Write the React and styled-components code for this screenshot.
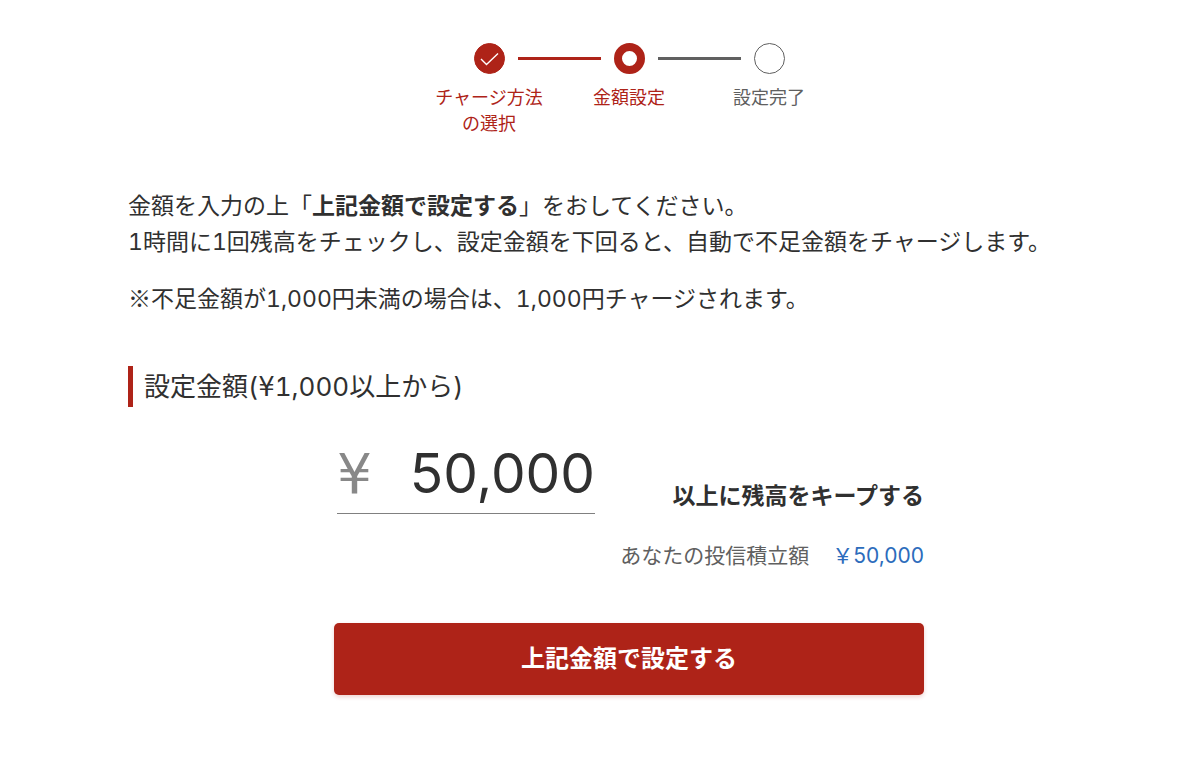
import React, { useState } from 'react'
import styled, { createGlobalStyle } from 'styled-components'

const red = '#ae2318'
const ink = '#303030'
const grey = '#606060'

const GlobalStyle = createGlobalStyle`
  * {
    box-sizing: border-box;
  }

  body {
    margin: 0;
    background: #fff;
    color: ${ink};
    font-family: Inter, 'Noto Sans CJK JP', sans-serif;
    font-size: 23px;
    line-height: 36px;
  }
`

const Page = styled.main`
  padding: 43px 70px 60px 128px;
`

const Steps = styled.ol`
  display: flex;
  justify-content: center;
  margin: 0;
  padding: 0;
  list-style: none;
`

const Step = styled.li`
  width: 140px;
  color: ${props => (props.$reached ? red : grey)};
  font-size: 18px;
  line-height: 26px;
  text-align: center;
`

const Track = styled.div`
  display: flex;
  align-items: center;
  gap: 13px;
  margin-bottom: 11px;
`

const Line = styled.span`
  flex: 1;
  height: 3px;
  background: ${props => props.$color || 'transparent'};
`

const Marker = styled.span`
  display: flex;
  width: 31px;
  height: 31px;
  border: ${props => (props.$state === 'current' ? `8px solid ${red}` : `1px solid ${props.$state === 'done' ? red : grey}`)};
  border-radius: 50%;
  background: ${props => (props.$state === 'done' ? red : '#fff')};
`

const Intro = styled.section`
  margin-top: 51px;
  font-variant-numeric: tabular-nums;
`

const Text = styled.p`
  margin: 0 0 21px;
`

const Mark = styled.span`
  font-family: 'Noto Sans CJK JP', sans-serif;
  line-height: 1;
`

const Yen = styled.span`
  font-family: 'DejaVu Sans', sans-serif;
  line-height: 1;
`

const Heading = styled.h2`
  margin: 49px 0 0;
  padding-left: 11px;
  border-left: 5px solid ${red};
  font-size: 26px;
  font-weight: 400;
  font-variant-numeric: tabular-nums;
  line-height: 41px;
`

const Form = styled.form`
  max-width: 590px;
  margin: 33px auto 0;
`

const AmountRow = styled.div`
  display: flex;
  align-items: flex-end;
  justify-content: space-between;
  padding-left: 3px;
`

const Field = styled.label`
  display: flex;
  align-items: baseline;
  width: 258px;
  height: 74px;
  border-bottom: 1px solid #808080;
  color: #888;
  font-size: 55px;
  line-height: 66px;
`

const Amount = styled.input`
  flex: 1;
  min-width: 0;
  height: 66px;
  padding: 0;
  border: 0;
  outline: 0;
  background: transparent;
  color: ${ink};
  font: inherit;
  text-align: right;
`

const Keep = styled.strong`
  font-weight: 700;
`

const Reserve = styled.p`
  display: flex;
  justify-content: flex-end;
  gap: 23px;
  margin: 24px 0 0;
  color: ${grey};
  font-size: 21px;
`

const Link = styled.a`
  color: #2c6cbc;
  text-decoration: none;
`

const Submit = styled.button`
  width: 100%;
  height: 72px;
  margin-top: 49px;
  padding: 0;
  border: 0;
  border-radius: 5px;
  background: ${red};
  box-shadow: 0 2px 4px rgba(174, 35, 24, 0.2);
  color: #fff;
  font: inherit;
  font-size: 24px;
  font-weight: 700;
  cursor: pointer;
`

const Check = () => (
  <svg width="29" height="29" viewBox="0 0 29 29" fill="none" stroke="#fff" strokeWidth="1.4" aria-hidden="true">
    <path d="M6 15L11.5 20.5L23 9.5" />
  </svg>
)

export default function App() {
  const [amount, setAmount] = useState('50,000')

  return (
    <>
      <GlobalStyle />
      <Page lang="ja">
        <Steps>
          <Step $reached>
            <Track>
              <Line />
              <Marker $state="done">
                <Check />
              </Marker>
              <Line $color={red} />
            </Track>
            チャージ方法
            <br />
            の選択
          </Step>
          <Step $reached aria-current="step">
            <Track>
              <Line $color={red} />
              <Marker $state="current" />
              <Line $color={grey} />
            </Track>
            金額設定
          </Step>
          <Step>
            <Track>
              <Line $color={grey} />
              <Marker $state="todo" />
              <Line />
            </Track>
            設定完了
          </Step>
        </Steps>

        <Intro>
          <Text>
            金額を入力の上「<b>上記金額で設定する</b>」をおしてください。
            <br />
            1時間に1回残高をチェックし、設定金額を下回ると、自動で不足金額をチャージします。
          </Text>
          <Text>
            <Mark>※</Mark>不足金額が1,000円未満の場合は、1,000円チャージされます。
          </Text>
        </Intro>

        <Heading>
          設定金額(<Yen>¥</Yen>1,000以上から)
        </Heading>

        <Form onSubmit={e => e.preventDefault()}>
          <AmountRow>
            <Field>
              <Yen>¥</Yen>
              <Amount
                aria-label="設定金額"
                inputMode="numeric"
                value={amount}
                onChange={e => setAmount(e.target.value)}
              />
            </Field>
            <Keep>以上に残高をキープする</Keep>
          </AmountRow>
          <Reserve>
            あなたの投信積立額
            <Link href="#reserve">￥50,000</Link>
          </Reserve>
          <Submit type="submit">上記金額で設定する</Submit>
        </Form>
      </Page>
    </>
  )
}
